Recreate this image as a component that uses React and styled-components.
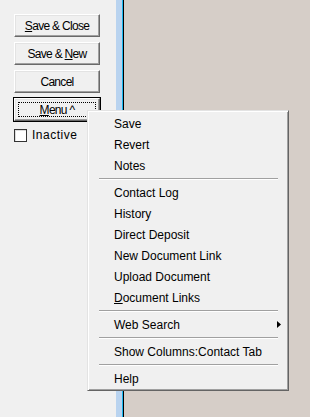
import React from 'react';
import styled, { createGlobalStyle } from 'styled-components';

const GlobalStyle = createGlobalStyle`
  html, body {
    margin: 0;
    padding: 0;
    background: #d6cec8;
  }
  * {
    box-sizing: border-box;
  }
`;

const Page = styled.div`
  position: relative;
  display: flex;
  width: 310px;
  height: 417px;
  overflow: hidden;
  font-family: 'Liberation Sans', Arial, sans-serif;
  color: #000;
`;

const SidePanel = styled.div`
  width: 116px;
  flex: none;
  background: #f0f0f0;
  padding: 14px 0 0 14px;
  display: flex;
  flex-direction: column;
  gap: 5px;
`;

const Splitter = styled.div`
  width: 8px;
  flex: none;
  background: #b9d3ef;
  border-right: 1px solid #000;
  box-shadow: inset -1px 0 0 #1ab8f0;
`;

const Workspace = styled.div`
  flex: 1;
  background: #d6cec8;
`;

const Button = styled.button`
  position: relative;
  width: 86px;
  height: 23px;
  padding: 0;
  margin: 0;
  background: #f0f0f0;
  font-family: 'Liberation Sans', Arial, sans-serif;
  font-size: 12px;
  letter-spacing: -0.7px;
  color: #000;
  border: 1px solid;
  border-color: #fff #696969 #696969 #fff;
  box-shadow: inset -1px -1px 0 #a0a0a0, inset 1px 1px 0 #e3e3e3;
  outline: ${p => (p.focused ? '1px solid #000' : 'none')};
  outline-offset: 0;

  ${p =>
    p.focused &&
    `
    &::after {
      content: '';
      position: absolute;
      left: 3px;
      top: 3px;
      right: 3px;
      bottom: 3px;
      border: 1px dotted #000;
    }
  `}

  u {
    text-decoration: underline;
    text-underline-offset: 1px;
  }
`;

const CheckRow = styled.label`
  display: flex;
  align-items: center;
  gap: 5px;
  margin-top: 2px;
  font-size: 12px;
  letter-spacing: 0.5px;
`;

const CheckBox = styled.span`
  width: 13px;
  height: 13px;
  background: #fff;
  border: 1px solid #333;
  box-shadow: inset 1px 1px 0 #dcdcdc;
`;

const Menu = styled.div`
  position: absolute;
  left: 87px;
  top: 110px;
  width: 202px;
  height: 281px;
  background: #f0f0f0;
  border: 1px solid;
  border-color: #e3e3e3 #646464 #646464 #e3e3e3;
  box-shadow: inset 1px 1px 0 #fff, inset -1px -1px 0 #a0a0a0;
  padding: 2px 1px 0 1px;
  display: flex;
  flex-direction: column;
`;

const MenuItem = styled.div`
  height: 21px;
  display: flex;
  align-items: center;
  justify-content: space-between;
  padding: 0 6px 0 25px;
  font-size: 12px;

  u {
    text-decoration: underline;
    text-underline-offset: 1px;
  }
`;

const Separator = styled.div`
  height: 6px;
  padding: 2px 9px 0 10px;

  &::before {
    content: '';
    display: block;
    height: 1px;
    background: #a0a0a0;
    border-bottom: 1px solid #fff;
    box-sizing: content-box;
  }
`;

const SubArrow = () => (
  <svg width="4" height="7" viewBox="0 0 4 7">
    <path d="M0 0 L4 3.5 L0 7 Z" fill="#000" />
  </svg>
);

const menu = [
  'Save',
  'Revert',
  'Notes',
  '-',
  'Contact Log',
  'History',
  'Direct Deposit',
  'New Document Link',
  'Upload Document',
  'links',
  '-',
  'web',
  '-',
  'Show Columns:Contact Tab',
  '-',
  'Help',
];

const App = () => (
  <Page>
    <GlobalStyle />
    <SidePanel>
      <Button>
        <u>S</u>ave &amp; Close
      </Button>
      <Button>
        Save &amp; <u>N</u>ew
      </Button>
      <Button>Cancel</Button>
      <Button focused>
        <u>M</u>enu ^
      </Button>
      <CheckRow>
        <CheckBox />
        Inactive
      </CheckRow>
    </SidePanel>
    <Splitter />
    <Workspace />

    <Menu>
      {menu.map((m, i) => {
        if (m === '-') return <Separator key={i} />;
        if (m === 'links')
          return (
            <MenuItem key={i}>
              <span>
                <u>D</u>ocument Links
              </span>
            </MenuItem>
          );
        if (m === 'web')
          return (
            <MenuItem key={i}>
              <span>Web Search</span>
              <SubArrow />
            </MenuItem>
          );
        return (
          <MenuItem key={i}>
            <span>{m}</span>
          </MenuItem>
        );
      })}
    </Menu>
  </Page>
);

export default App;
